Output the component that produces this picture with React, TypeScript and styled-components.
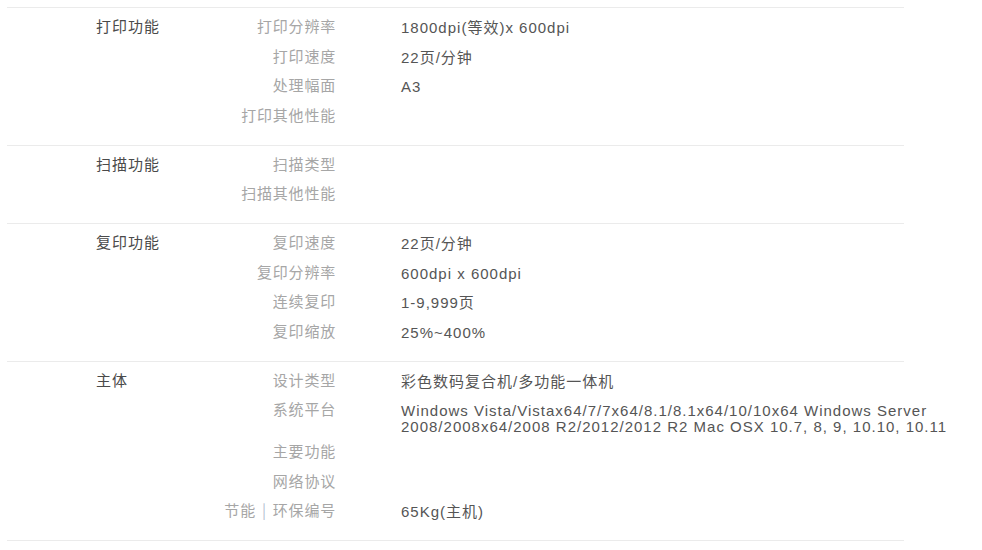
import React from 'react'
import styled, { createGlobalStyle } from 'styled-components'

const GlobalStyle = createGlobalStyle`
    html, body {
        margin: 0;
        padding: 0;
        background: #ffffff;
    }
    body {
        font-family: "Liberation Sans", Arial, "Noto Sans CJK SC", sans-serif;
        font-size: 15px;
        color: #555555;
    }
`

const SpecTable = styled.div`
    width: 897px;
    margin-left: 7px;
    padding-top: 7px;
`

const Group = styled.section`
    display: flex;
    border-top: 1px solid #ebebeb;
    padding: 6px 0 12.6px;

    &:last-child {
        border-bottom: 1px solid #ebebeb;
    }
`

const GroupTitle = styled.div`
    width: 71px;
    padding-left: 89px;
    padding-top: 4px;
    line-height: 16px;
    color: #4a4a4a;
    letter-spacing: 1px;
    font-family: "Noto Sans CJK SC", sans-serif;
    flex-shrink: 0;
`

const Rows = styled.div`
    display: flex;
    flex-direction: column;
`

const Row = styled.div`
    display: grid;
    grid-template-columns: 169px 560px;
    column-gap: 65px;
    min-height: 29.5px;
`

const Label = styled.div`
    text-align: right;
    color: #a6a6a6;
    line-height: 16px;
    padding-top: 4px;
    letter-spacing: 0.8px;
    font-family: "Noto Sans CJK SC", sans-serif;
`

const Value = styled.div`
    line-height: 16px;
    padding: 6px 0 4px;
    letter-spacing: 1px;
    color: #555555;
`

const Divider = styled.span`
    color: #b4c0d0;
    margin: 0 6px;
`

type Spec = { label: React.ReactNode; value?: string }

const groups: { title: string; specs: Spec[] }[] = [
    {
        title: '打印功能',
        specs: [
            { label: '打印分辨率', value: '1800dpi(等效)x 600dpi' },
            { label: '打印速度', value: '22页/分钟' },
            { label: '处理幅面', value: 'A3' },
            { label: '打印其他性能' },
        ],
    },
    {
        title: '扫描功能',
        specs: [{ label: '扫描类型' }, { label: '扫描其他性能' }],
    },
    {
        title: '复印功能',
        specs: [
            { label: '复印速度', value: '22页/分钟' },
            { label: '复印分辨率', value: '600dpi x 600dpi' },
            { label: '连续复印', value: '1-9,999页' },
            { label: '复印缩放', value: '25%~400%' },
        ],
    },
    {
        title: '主体',
        specs: [
            { label: '设计类型', value: '彩色数码复合机/多功能一体机' },
            {
                label: '系统平台',
                value:
                    'Windows Vista/Vistax64/7/7x64/8.1/8.1x64/10/10x64 Windows Server 2008/2008x64/2008 R2/2012/2012 R2 Mac OSX 10.7, 8, 9, 10.10, 10.11',
            },
            { label: '主要功能' },
            { label: '网络协议' },
            {
                label: (
                    <>
                        节能<Divider>|</Divider>环保编号
                    </>
                ),
                value: '65Kg(主机)',
            },
        ],
    },
]

export default function App() {
    return (
        <>
            <GlobalStyle />
            <SpecTable>
                {groups.map((group) => (
                    <Group key={group.title}>
                        <GroupTitle>{group.title}</GroupTitle>
                        <Rows>
                            {group.specs.map((spec, i) => (
                                <Row key={i}>
                                    <Label>{spec.label}</Label>
                                    <Value>{spec.value}</Value>
                                </Row>
                            ))}
                        </Rows>
                    </Group>
                ))}
            </SpecTable>
        </>
    )
}
